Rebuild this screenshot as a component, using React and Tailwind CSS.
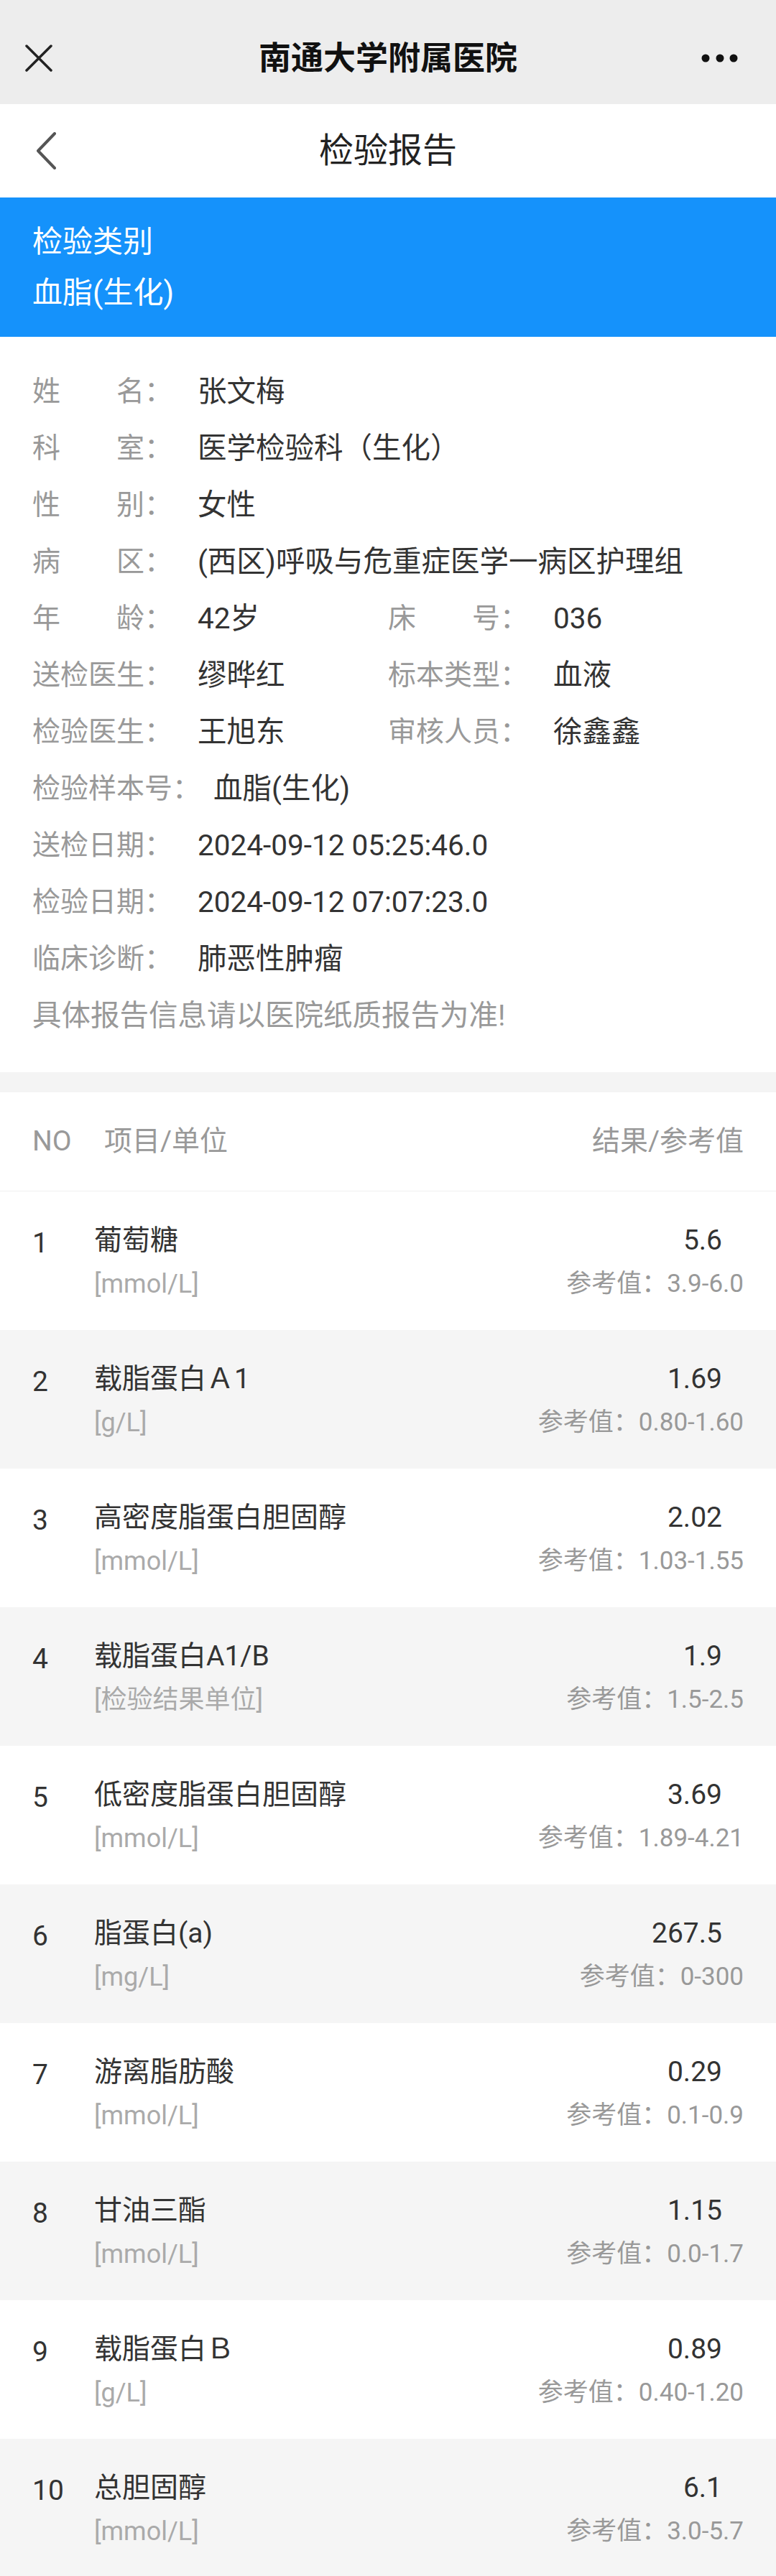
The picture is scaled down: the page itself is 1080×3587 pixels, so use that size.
import React from 'react';

const info = [
  [['姓名', '张文梅']],
  [['科室', '医学检验科（生化）']],
  [['性别', '女性']],
  [['病区', '(西区)呼吸与危重症医学一病区护理组']],
  [['年龄', '42岁'], ['床号', '036']],
  [['送检医生', '缪晔红'], ['标本类型', '血液']],
  [['检验医生', '王旭东'], ['审核人员', '徐鑫鑫']],
  [['检验样本号', '血脂(生化)']],
  [['送检日期', '2024-09-12 05:25:46.0']],
  [['检验日期', '2024-09-12 07:07:23.0']],
  [['临床诊断', '肺恶性肿瘤']],
];

const results = [
  { name: '葡萄糖', unit: '[mmol/L]', value: '5.6', ref: '3.9-6.0' },
  { name: '载脂蛋白Ａ1', unit: '[g/L]', value: '1.69', ref: '0.80-1.60' },
  { name: '高密度脂蛋白胆固醇', unit: '[mmol/L]', value: '2.02', ref: '1.03-1.55' },
  { name: '载脂蛋白A1/B', unit: '[检验结果单位]', value: '1.9', ref: '1.5-2.5' },
  { name: '低密度脂蛋白胆固醇', unit: '[mmol/L]', value: '3.69', ref: '1.89-4.21' },
  { name: '脂蛋白(a)', unit: '[mg/L]', value: '267.5', ref: '0-300' },
  { name: '游离脂肪酸', unit: '[mmol/L]', value: '0.29', ref: '0.1-0.9' },
  { name: '甘油三酯', unit: '[mmol/L]', value: '1.15', ref: '0.0-1.7' },
  { name: '载脂蛋白Ｂ', unit: '[g/L]', value: '0.89', ref: '0.40-1.20' },
  { name: '总胆固醇', unit: '[mmol/L]', value: '6.1', ref: '3.0-5.7' },
];

const Field = ({ label, value }) => (
  <div className="flex items-center">
    <div className="min-w-[212px] shrink-0 flex text-[#999]">
      {label.length === 2 ? (
        <span className="w-[156px] flex justify-between">
          <span>{label[0]}</span>
          <span>{label[1]}</span>
        </span>
      ) : (
        <span>{label}</span>
      )}
      <span>：</span>
    </div>
    <div className="ml-[18px] text-[40.5px] text-[#333] whitespace-nowrap">{value}</div>
  </div>
);

export default function App() {
  return (
    <div className="w-[1080px] bg-white font-['Roboto','Noto_Sans_CJK_SC',sans-serif]">
      {/* wechat title bar */}
      <div className="h-[145px] bg-[#ededed] pt-[17px]">
        <div className="h-[128px] flex items-center justify-between px-[34px] relative">
          <svg width="40" height="38" viewBox="0 0 40 38">
            <path d="M3 2 L37 36 M37 2 L3 36" stroke="#222" strokeWidth="3.5" strokeLinecap="round" />
          </svg>
          <div className="absolute left-0 right-0 text-center text-[45px] font-semibold text-[#111] leading-none">南通大学附属医院</div>
          <svg width="56" height="14" viewBox="0 0 56 14" className="mr-[14px]">
            <circle cx="6" cy="7" r="5.5" fill="#111" />
            <circle cx="26" cy="7" r="5.5" fill="#111" />
            <circle cx="45" cy="7" r="5.5" fill="#111" />
          </svg>
        </div>
      </div>

      {/* page nav */}
      <div className="h-[130px] bg-white flex items-center relative">
        <svg width="30" height="52" viewBox="0 0 30 52" className="ml-[49px]">
          <path d="M27 2 L4 26 L27 50" fill="none" stroke="#555" strokeWidth="4" strokeLinecap="round" strokeLinejoin="round" />
        </svg>
        <div className="absolute left-0 right-0 text-center text-[48px] text-[#222] pointer-events-none">检验报告</div>
      </div>

      {/* category band */}
      <div className="bg-[#1592fb] py-[26px] px-[45px] text-white text-[42px] leading-[71px]">
        <div>检验类别</div>
        <div>血脂(生化)</div>
      </div>

      {/* patient info */}
      <div className="pt-[37px] pb-[39px] px-[45px] text-[39px]">
        {info.map((row, i) => (
          <div key={i} className="h-[79px] grid grid-cols-2">
            {row.map(([label, value]) => (
              <Field key={label} label={label} value={value} />
            ))}
          </div>
        ))}
        <div className="h-[79px] flex items-center text-[40.5px] text-[#999]">具体报告信息请以医院纸质报告为准!</div>
      </div>

      <div className="h-[28px] bg-[#f4f4f4]" />

      {/* results table */}
      <div className="h-[138px] flex items-center px-[45px] text-[39px] text-[#999] border-b border-[#f0f0f0]">
        <div className="w-[100px]">NO</div>
        <div className="flex-1">项目/单位</div>
        <div>结果/参考值</div>
      </div>
      {results.map((r, i) => (
        <div
          key={i}
          className={`h-[193px] flex items-center px-[45px] pt-[6px] ${i % 2 === 1 ? 'bg-[#f5f5f5]' : 'bg-white'}`}
        >
          <div className="w-[86px] self-start pt-[37px] text-[39px] leading-[58px] text-[#333]">{i + 1}</div>
          <div className="flex-1">
            <div className="text-[39px] leading-[58px] text-[#333]">{r.name}</div>
            <div className="text-[36px] leading-[64px] text-[#aaa]">{r.unit}</div>
          </div>
          <div className="text-right">
            <div className="text-[39px] leading-[58px] text-[#333] mr-[30px]">{r.value}</div>
            <div className="text-[35px] leading-[64px] text-[#999]">参考值：{r.ref}</div>
          </div>
        </div>
      ))}
    </div>
  );
}
